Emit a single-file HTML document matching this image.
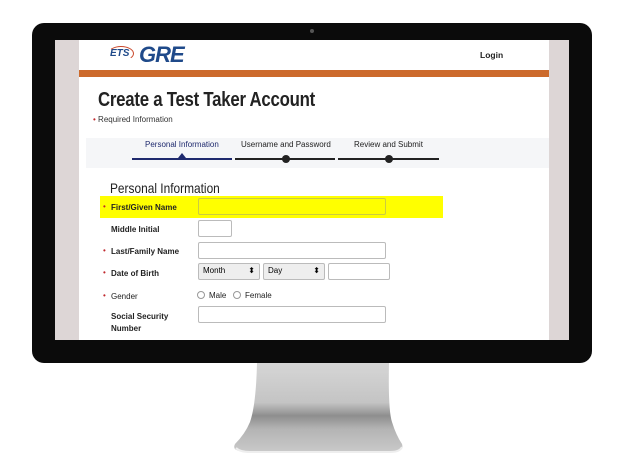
<!DOCTYPE html>
<html><head><style>
*{margin:0;padding:0;box-sizing:border-box}
body{width:625px;height:475px;background:#fff;position:relative;overflow:hidden;font-family:"Liberation Sans",sans-serif}
.a{position:absolute}
.lbl{position:absolute;font-size:8px;font-weight:bold;color:#222;left:111px}
.st{position:absolute;left:103px;color:#c0282d;font-size:8px}
.in{position:absolute;border:1px solid #bbb;border-radius:2px;background:#fff;height:17px}
</style></head><body>
<!-- stand -->
<svg class="a" style="left:220px;top:360px" width="190" height="100">
<defs><linearGradient id="g" x1="0" y1="0" x2="0" y2="1"><stop offset="0" stop-color="#d6d6d6"/><stop offset=".45" stop-color="#c4c4c4"/><stop offset=".6" stop-color="#8e8e8e"/><stop offset=".75" stop-color="#b4b4b4"/><stop offset="1" stop-color="#c8c8c8"/></linearGradient></defs>
<path d="M37 3 L169 3 Q168 50 172 62 Q176 75 182 84 Q184 90 176 91 L20 91 Q12 90 15 84 Q25 74 30 62 Q36 45 37 3Z" fill="url(#g)"/>
<path d="M16 88 Q20 92 30 92 L170 92 Q180 92 182 87" stroke="#eee" stroke-width="2" fill="none"/>
</svg>
<!-- bezel -->
<div class="a" style="left:32px;top:23px;width:560px;height:340px;background:#0b0b0b;border-radius:12px"></div>
<div class="a" style="left:310px;top:29px;width:4px;height:4px;border-radius:50%;background:#555"></div>
<div class="a" style="left:55px;top:40px;width:514px;height:300px;background:#ddd6d6"></div>
<div class="a" style="left:79px;top:40px;width:470px;height:300px;background:#fff"></div>
<!-- header -->
<div class="a" style="left:110px;top:48px;font-size:10px;font-style:italic;font-weight:bold;color:#1f4a8a">ETS</div>
<div class="a" style="left:108px;top:46px;width:26px;height:15px;border:1.5px solid #c9482b;border-radius:50%;border-left-color:transparent;border-bottom-color:transparent"></div>
<div class="a" style="left:139px;top:42px;font-size:22px;font-style:italic;font-weight:bold;color:#1f4a8a;letter-spacing:-1px">GRE</div>
<div class="a" style="left:480px;top:50px;font-size:8.5px;font-weight:bold;color:#222">Login</div>
<div class="a" style="left:79px;top:70px;width:470px;height:7px;background:#cc6a2c"></div>
<div class="a" style="left:98px;top:89px;font-size:20px;font-weight:bold;color:#222;transform:scaleX(.84);transform-origin:left;letter-spacing:-.3px">Create a Test Taker Account</div>
<div class="a" style="left:93px;top:115px;font-size:8px;color:#333"><span style="color:#c0282d">•</span> Required Information</div>
<!-- progress -->
<div class="a" style="left:86px;top:138px;width:463px;height:30px;background:#f5f6f8"></div>
<div class="a" style="left:145px;top:140px;font-size:8px;color:#1f2a6e">Personal Information</div>
<div class="a" style="left:241px;top:140px;font-size:8px;color:#222">Username and Password</div>
<div class="a" style="left:354px;top:140px;font-size:8px;color:#222">Review and Submit</div>
<div class="a" style="left:132px;top:158px;width:100px;height:2px;background:#1f2a6e"></div>
<div class="a" style="left:178px;top:153px;width:0;height:0;border-left:4px solid transparent;border-right:4px solid transparent;border-bottom:5px solid #1f2a6e"></div>
<div class="a" style="left:235px;top:158px;width:100px;height:2px;background:#222"></div>
<div class="a" style="left:338px;top:158px;width:101px;height:2px;background:#222"></div>
<div class="a" style="left:282px;top:155px;width:8px;height:8px;border-radius:50%;background:#222"></div>
<div class="a" style="left:385px;top:155px;width:8px;height:8px;border-radius:50%;background:#222"></div>
<!-- form -->
<div class="a" style="left:110px;top:180px;font-size:14px;color:#222;transform:scaleX(.85);transform-origin:left">Personal Information</div>
<div class="a" style="left:100px;top:196px;width:343px;height:22px;background:#ffff00"></div>
<div class="st" style="top:202px">•</div><div class="lbl" style="top:203px">First/Given Name</div>
<div class="in" style="left:198px;top:198px;width:188px;background:#ffff00;border-color:#cccc40"></div>
<div class="lbl" style="top:225px">Middle Initial</div>
<div class="in" style="left:198px;top:220px;width:34px"></div>
<div class="st" style="top:246px">•</div><div class="lbl" style="top:247px">Last/Family Name</div>
<div class="in" style="left:198px;top:242px;width:188px"></div>
<div class="st" style="top:268px">•</div><div class="lbl" style="top:269px">Date of Birth</div>
<div class="in" style="left:198px;top:263px;width:62px;background:#eee;font-size:8px;padding:2px 4px">Month<span style="float:right">⬍</span></div>
<div class="in" style="left:263px;top:263px;width:62px;background:#eee;font-size:8px;padding:2px 4px">Day<span style="float:right">⬍</span></div>
<div class="in" style="left:328px;top:263px;width:62px"></div>
<div class="st" style="top:291px">•</div><div class="lbl" style="top:292px;font-weight:normal">Gender</div>
<div class="a" style="left:197px;top:291px;width:8px;height:8px;border:1px solid #999;border-radius:50%"></div>
<div class="a" style="left:209px;top:291px;font-size:8px;color:#222">Male</div>
<div class="a" style="left:233px;top:291px;width:8px;height:8px;border:1px solid #999;border-radius:50%"></div>
<div class="a" style="left:245px;top:291px;font-size:8px;color:#222">Female</div>
<div class="lbl" style="top:311px;line-height:12px">Social Security<br>Number</div>
<div class="in" style="left:198px;top:306px;width:188px"></div>
</body></html>
